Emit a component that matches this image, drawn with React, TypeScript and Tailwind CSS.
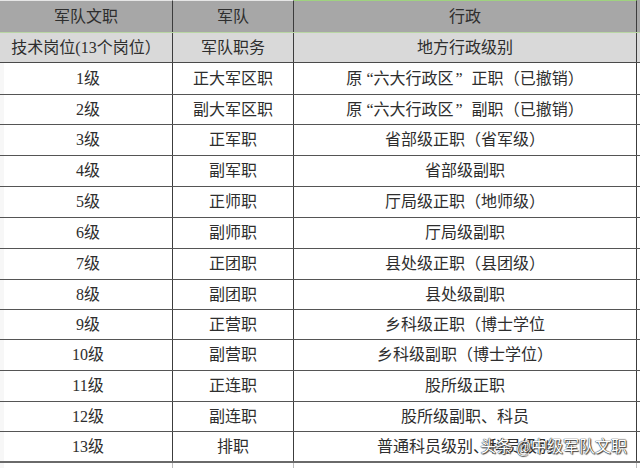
import type { ReactNode } from "react"

// quoted region name; the quote marks sit in their own spans so their spacing matches the reference
const quoted = (rank: string): ReactNode => (
  <>
    原<span className="font-['Liberation_Serif',serif] ml-[4px]">“</span>六大行政区
    <span className="font-['Liberation_Serif',serif] ml-[2px] mr-[9px]">”</span>
    {rank}（已撤销）
  </>
)

const rows: { level: string; army: string; gov: ReactNode; h: string }[] = [
  { level: "1级", army: "正大军区职", gov: quoted("正职"), h: "h-[32px]" },
  { level: "2级", army: "副大军区职", gov: quoted("副职"), h: "h-[30px]" },
  { level: "3级", army: "正军职", gov: "省部级正职（省军级）", h: "h-[31px]" },
  { level: "4级", army: "副军职", gov: "省部级副职", h: "h-[31px]" },
  { level: "5级", army: "正师职", gov: "厅局级正职（地师级）", h: "h-[31px]" },
  { level: "6级", army: "副师职", gov: "厅局级副职", h: "h-[31px]" },
  { level: "7级", army: "正团职", gov: "县处级正职（县团级）", h: "h-[31px]" },
  { level: "8级", army: "副团职", gov: "县处级副职", h: "h-[30px]" },
  { level: "9级", army: "正营职", gov: "乡科级正职（博士学位", h: "h-[30px]" },
  { level: "10级", army: "副营职", gov: "乡科级副职（博士学位）", h: "h-[31px]" },
  { level: "11级", army: "正连职", gov: "股所级正职", h: "h-[31px]" },
  { level: "12级", army: "副连职", gov: "股所级副职、科员", h: "h-[30px]" },
  { level: "13级", army: "排职", gov: "普通科员级别、科员级别", h: "h-[31px]" },
]

export default function App() {
  return (
    <div className="w-[640px] h-[468px] overflow-hidden bg-white text-[16px] leading-none text-[#2e2e2e] font-['Liberation_Serif','Noto_Sans_CJK_SC',serif]">
      {/* header: category */}
      <div className="flex h-[33px] bg-[#a7a7a7] border-b border-[#b9d6a4]">
        <div className="w-[173px] flex items-center justify-center border-r border-[#3c3c3c] border-t border-t-[#e6e6e6]">军队文职</div>
        <div className="w-[121px] flex items-center justify-center border-r border-[#3c3c3c] border-t border-t-[#e6e6e6]">军队</div>
        <div className="w-[343px] flex items-center justify-center border-r border-[#3c3c3c] border-t border-t-[#9fd27f]">行政</div>
      </div>

      {/* header: sub titles */}
      <div className="flex h-[30px] bg-[#d9d9d9] border-b border-[#4a4a4a]">
        <div className="w-[173px] flex items-center justify-center border-r border-[#3c3c3c]">技术岗位(13个岗位）</div>
        <div className="w-[121px] flex items-center justify-center border-r border-[#3c3c3c]">军队职务</div>
        <div className="w-[343px] flex items-center justify-center border-r border-[#3c3c3c]">地方行政级别</div>
      </div>

      {rows.map((r, i) => (
        <div
          key={r.level}
          className={`flex ${r.h} ${i === rows.length - 1 ? "border-b-2 border-[#6a6a6a]" : "border-b border-[#555]"}`}
        >
          <div className="w-[173px] flex items-center justify-center border-r border-[#3c3c3c] border-l-[4px] border-l-[#f7f7f7]">{r.level}</div>
          <div className="w-[121px] flex items-center justify-center border-r border-[#3c3c3c]">{r.army}</div>
          <div className="relative w-[343px] flex items-center justify-center border-r border-[#3c3c3c]">
            <span>{r.gov}</span>
            {i === rows.length - 1 && (
              <span className="absolute right-[9px] top-1/2 -translate-y-1/2 text-white [text-shadow:0_0_1px_#222,0_0_1px_#222,1px_1px_1px_#444]">
                头条 @中级军队文职
              </span>
            )}
          </div>
        </div>
      ))}

      {/* trailing gridlines below table */}
      <div className="flex h-[8px]">
        <div className="w-[173px] border-r border-[#bbb] border-l-[4px] border-l-[#f7f7f7]" />
        <div className="w-[121px] border-r border-[#bbb]" />
        <div className="w-[343px] border-r border-[#bbb]" />
      </div>
    </div>
  )
}
